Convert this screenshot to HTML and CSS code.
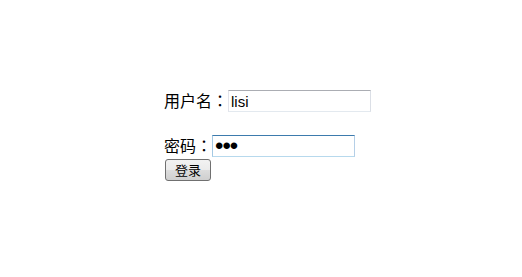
FILE: index.html
```html
<!DOCTYPE html>
<html lang="zh-CN">
<head>
<meta charset="utf-8">
<title>登录</title>
<link rel="stylesheet" href="styles.css">
</head>
<body>
<form class="login" action="#">
  <div class="row row-user">
    <label class="label" for="u">用户名<span class="colon" lang="zh-TW">：</span></label>
    <input class="field" id="u" type="text" value="lisi">
  </div>
  <div class="row row-pass">
    <label class="label" for="p">密码<span class="colon" lang="zh-TW">：</span></label>
    <input class="field field-focus" id="p" type="password" value="123">
  </div>
  <button class="btn" type="button">登录</button>
</form>
</body>
</html>
```

FILE: styles.css
```css
html, body {
  margin: 0;
  padding: 0;
  background: #ffffff;
}

.login {
  display: flex;
  flex-direction: column;
  align-items: flex-start;
  padding: 90px 0 0 164px;
  font-family: "Noto Sans CJK SC", "Liberation Sans", sans-serif;
}

.row {
  display: flex;
  align-items: center;
  height: 22px;
}

.row-pass {
  margin-top: 23px;
}

.label {
  font-size: 16px;
  line-height: 22px;
  color: #000000;
  position: relative;
  top: -1px;
}

.colon {
  font-family: "Noto Sans CJK TC", "Noto Sans CJK SC", sans-serif;
}

.field {
  box-sizing: border-box;
  width: 143px;
  height: 22px;
  margin: 0;
  padding: 0 0 0 2px;
  border: 1px solid;
  border-color: #abadb3 #dbdfe6 #e3e9ef #e2e3ea;
  border-radius: 0;
  background: #ffffff;
  font-family: "Liberation Sans", sans-serif;
  font-size: 15px;
  color: #000000;
  outline: none;
}

.field-focus {
  border-color: #3d7bad #b5cfe7 #b7d9ed #a4c9e3;
  font-size: 24px;
  letter-spacing: -1px;
  padding-left: 2px;
}

.btn {
  box-sizing: border-box;
  margin: 2px 0 0 1px;
  width: 46px;
  height: 22px;
  padding: 0;
  border: 1px solid #707070;
  border-radius: 3px;
  background: linear-gradient(#f2f2f2 0%, #ebebeb 50%, #dddddd 50%, #cfcfcf 100%);
  font-family: "Noto Sans CJK SC", sans-serif;
  font-size: 13px;
  line-height: 18px;
  color: #000000;
}
```
